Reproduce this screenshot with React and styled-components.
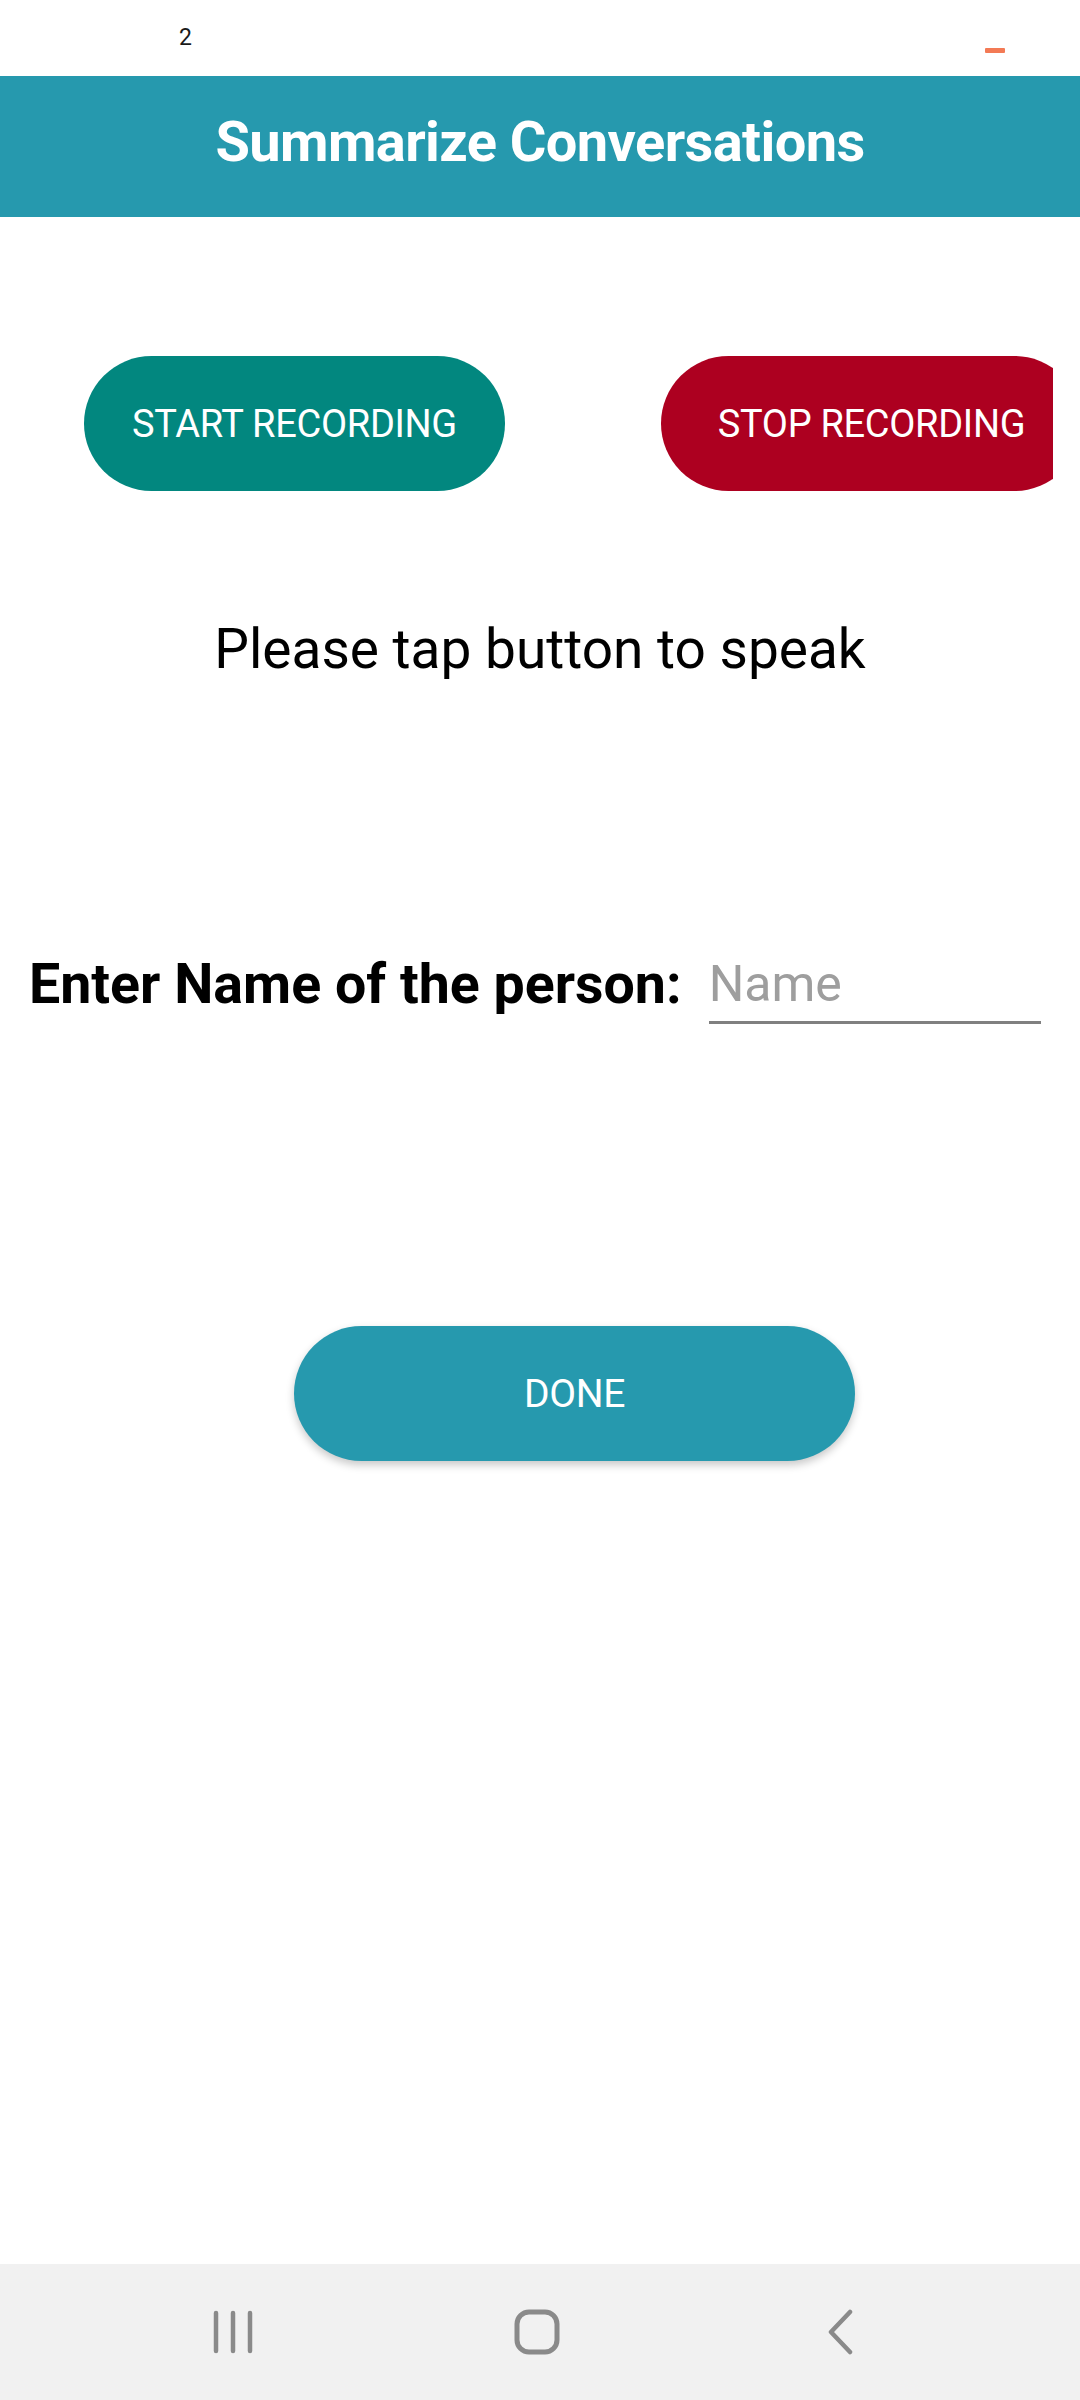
import React from "react";
import styled, { createGlobalStyle } from "styled-components";

const GlobalStyle = createGlobalStyle`
  html, body { margin: 0; padding: 0; background: #ffffff; }
  body { font-family: Roboto, "Noto Sans", sans-serif; }
  * { box-sizing: border-box; }
`;

const Screen = styled.div`
  display: flex;
  flex-direction: column;
  min-height: 2400px;
  width: 1080px;
  background: #ffffff;
`;

const StatusBar = styled.div`
  height: 76px;
  display: flex;
  justify-content: space-between;
  align-items: flex-start;
  padding: 0 75px 0 179px;
`;

const StatusText = styled.span`
  margin-top: 24px;
  font-size: 23px;
  line-height: 28px;
  color: #1a1a1a;
`;

const BatteryDash = styled.span`
  margin-top: 48px;
  width: 20px;
  height: 5px;
  border-radius: 1px;
  background: #f37a55;
`;

const Header = styled.header`
  height: 141px;
  padding-bottom: 10px;
  background: #2699ae;
  display: flex;
  align-items: center;
  justify-content: center;
`;

const Title = styled.h1`
  margin: 0;
  color: #ffffff;
  font-size: 56px;
  font-weight: 700;
  letter-spacing: -0.6px;
`;

const Main = styled.main`
  flex: 1;
  display: flex;
  flex-direction: column;
`;

const ButtonRow = styled.div`
  margin-top: 139px;
  width: 1053px;
  padding-left: 84px;
  display: flex;
  gap: 156px;
  overflow: hidden;
`;

const PillButton = styled.button`
  flex-shrink: 0;
  width: ${(p) => p.$width || 421}px;
  height: 135px;
  border: none;
  border-radius: 68px;
  background: ${(p) => p.$bg};
  color: #ffffff;
  font-family: Roboto, "Noto Sans", sans-serif;
  font-size: ${(p) => p.$size || 38}px;
  font-weight: 400;
  letter-spacing: -0.3px;
  text-transform: uppercase;
  display: flex;
  align-items: center;
  justify-content: center;
  padding: 0;
  box-shadow: ${(p) => (p.$raised ? "0 4px 8px rgba(0,0,0,0.22)" : "none")};
`;

const Prompt = styled.p`
  margin: 123px 0 0;
  text-align: center;
  font-size: 55px;
  line-height: 70px;
  color: #000000;
`;

const NameRow = styled.div`
  margin-top: 262px;
  padding-left: 29px;
  display: flex;
  align-items: center;
  gap: 27px;
`;

const Label = styled.label`
  font-size: 55.5px;
  font-weight: 700;
  line-height: 70px;
  color: #000000;
`;

const NameInput = styled.input`
  width: 332px;
  height: 78px;
  border: none;
  border-bottom: 3px solid #808080;
  outline: none;
  padding: 0;
  font-family: Roboto, "Noto Sans", sans-serif;
  font-size: 50px;
  color: #000;
  background: transparent;
  &::placeholder { color: #9e9e9e; }
`;

const DoneWrap = styled.div`
  margin-top: 302px;
  padding-left: 294px;
`;

const NavBar = styled.nav`
  height: 136px;
  background: #f1f1f1;
  display: flex;
  align-items: center;
`;

const NavSlot = styled.div`
  width: ${(p) => p.$w}px;
  margin-left: ${(p) => p.$ml}px;
  height: 46px;
  display: flex;
  align-items: center;
  justify-content: center;
`;

const Icon = styled.svg`
  display: block;
`;

export default function App() {
  return (
    <>
      <GlobalStyle />
      <Screen>
        <StatusBar>
          <StatusText>2</StatusText>
          <BatteryDash />
        </StatusBar>
        <Header>
          <Title>Summarize Conversations</Title>
        </Header>
        <Main>
          <ButtonRow>
            <PillButton $bg="#02877f">Start Recording</PillButton>
            <PillButton $bg="#ad0020">Stop Recording</PillButton>
          </ButtonRow>
          <Prompt>Please tap button to speak</Prompt>
          <NameRow>
            <Label htmlFor="name">Enter Name of the person:</Label>
            <NameInput id="name" placeholder="Name" />
          </NameRow>
          <DoneWrap>
            <PillButton $bg="#2699ae" $width={561} $size={39} $raised>Done</PillButton>
          </DoneWrap>
        </Main>
        <NavBar>
          <NavSlot $w={42} $ml={213}>
            <Icon width="42" height="44" viewBox="0 0 42 44">
              <g stroke="#8a8a8a" strokeWidth="4.5" strokeLinecap="round">
                <line x1="3" y1="3" x2="3" y2="41" />
                <line x1="20" y1="3" x2="20" y2="41" />
                <line x1="37" y1="3" x2="37" y2="41" />
              </g>
            </Icon>
          </NavSlot>
          <NavSlot $w={46} $ml={259}>
            <Icon width="46" height="46" viewBox="0 0 46 46">
              <rect x="3" y="3" width="40" height="40" rx="12" fill="none" stroke="#8a8a8a" strokeWidth="5" />
            </Icon>
          </NavSlot>
          <NavSlot $w={28} $ml={267}>
            <Icon width="28" height="46" viewBox="0 0 28 46">
              <polyline points="23,3 4,23 23,43" fill="none" stroke="#8a8a8a" strokeWidth="4.5" strokeLinecap="round" strokeLinejoin="round" />
            </Icon>
          </NavSlot>
        </NavBar>
      </Screen>
    </>
  );
}
